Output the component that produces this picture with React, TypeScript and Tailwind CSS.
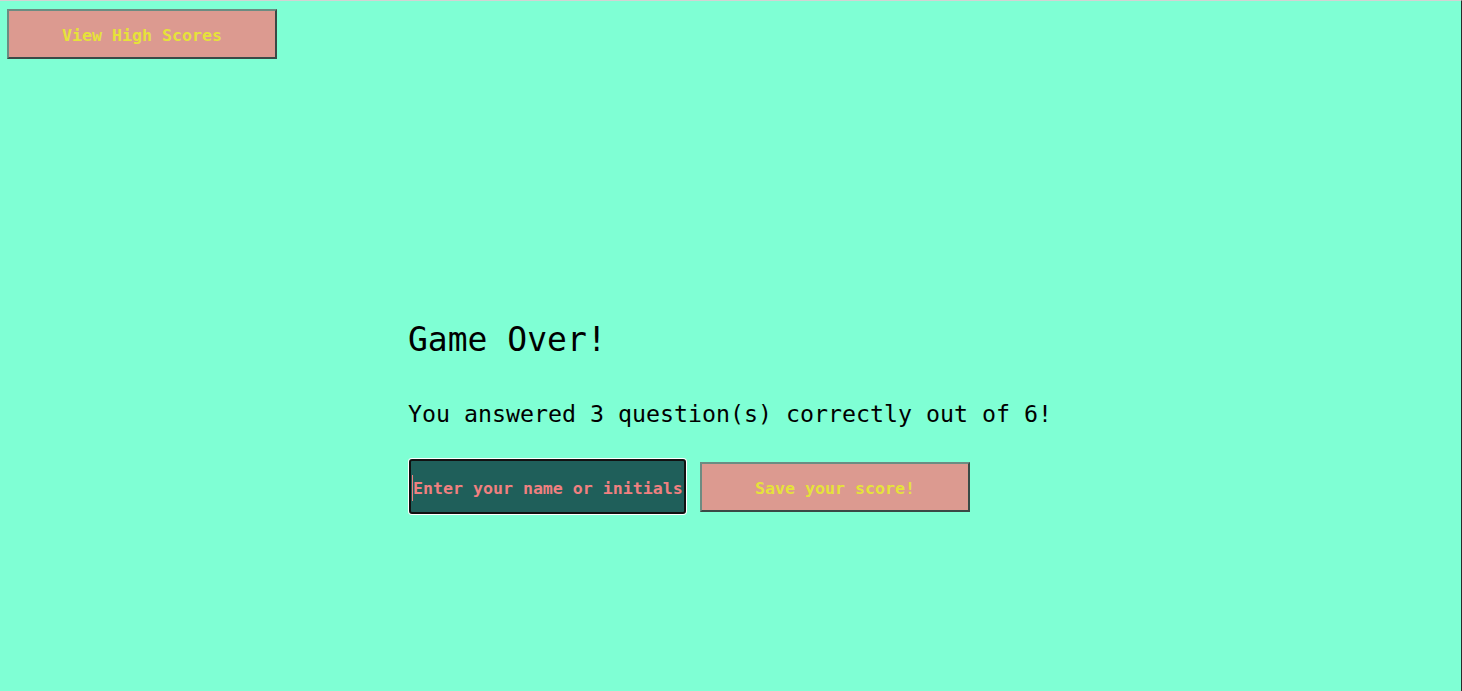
import React from "react";

const mono = { fontFamily: '"DejaVu Sans Mono", monospace' };

export default function App() {
  return (
    <div
      className="w-[1462px] h-[691px] bg-[#7fffd4] border-t border-t-[#d3d3d3] border-r border-r-[#2a2a2a] overflow-hidden"
      style={mono}
    >
      <div className="pl-[7px] pt-[8px]">
        <button className="w-[270px] h-[50px] pt-[5px] bg-[#dc9a90] text-[#e6e23a] font-bold text-[16.6px] border-2 border-t-[#6c8c82] border-l-[#6c8c82] border-b-[#3a4a46] border-r-[#3a4a46]">
          View High Scores
        </button>
      </div>
      <div className="w-[646px] ml-[408px] mt-[261px] flex flex-col">
        <h1 className="text-[33px] leading-[40px] text-black">Game Over!</h1>
        <p className="mt-[40px] text-[23.25px] leading-[28px] text-black">
          You answered 3 question(s) correctly out of 6!
        </p>
        <div className="mt-[30px] flex items-center gap-[13px]">
          <div className="w-[279px] h-[57px] rounded-[4px] bg-white p-[1px]">
            <div className="w-full h-full rounded-[3px] bg-[#1f5f5a] border-2 border-[#111] flex items-center pl-[1px] pt-[5px]">
              <span className="w-px h-[26px] bg-[#f08080] -mt-[3px]"></span>
              <span className="text-[#f08080] font-bold text-[16.6px]">Enter your name or initials</span>
            </div>
          </div>
          <button className="w-[270px] h-[50px] pt-[5px] bg-[#dc9a90] text-[#e6e23a] font-bold text-[16.6px] border-2 border-t-[#6c8c82] border-l-[#6c8c82] border-b-[#3a4a46] border-r-[#3a4a46]">
            Save your score!
          </button>
        </div>
      </div>
    </div>
  );
}
